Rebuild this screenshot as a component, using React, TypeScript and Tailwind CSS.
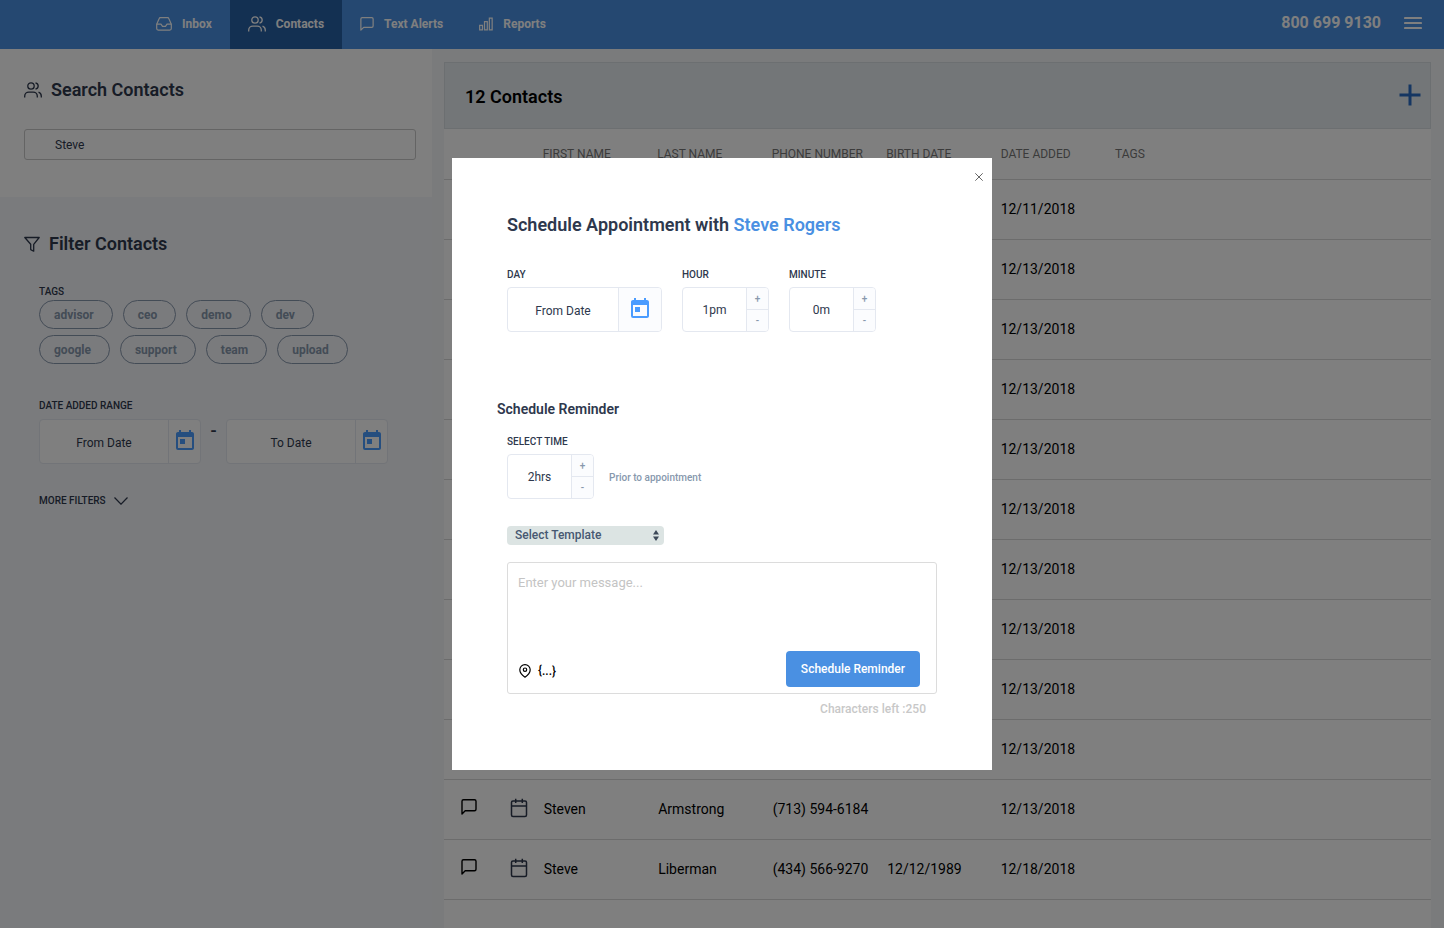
import { useState } from "react";
import type { ReactNode } from "react";
import { MdToday } from "react-icons/md";

type IconProps = { className?: string };

const UsersIcon = ({ className }: IconProps) => (
  <svg viewBox="0 0 18 16" fill="none" stroke="currentColor" strokeWidth="1.3" className={className}>
    <circle cx="7" cy="4" r="3.2" />
    <path d="M11.500 0.900c1.600.4 2.700 1.600 2.700 3.100s-1.100 2.700-2.700 3.100" />
    <path d="M0.700 15.500v-1.300c0-2.300 1.800-4.100 4.100-4.100h4.400c2.300 0 4.100 1.800 4.100 4.100v1.300" />
    <path d="M14.500 10.200c1.700.6 2.800 2.100 2.800 4v1.300" />
  </svg>
);

const ChatIcon = ({ className }: IconProps) => (
  <svg viewBox="0 0 16 16" fill="none" stroke="currentColor" strokeWidth="1.4" strokeLinejoin="round" className={className}>
    <path d="M15 10.300c0 .8-.7 1.500-1.500 1.500H4.200L1 15V2.300C1 1.500 1.700.8 2.500.8h11c.8 0 1.500.7 1.500 1.500z" />
  </svg>
);

const InboxIcon = ({ className }: IconProps) => (
  <svg viewBox="0 0 16 14" fill="none" stroke="currentColor" strokeWidth="1.2" strokeLinejoin="round" className={className}>
    <path d="M15.300 7.200h-4.300l-1.500 2.200h-3L5 7.200H.7" />
    <path d="M3.200 1.500.7 7.200v4.400c0 .9.6 1.500 1.500 1.500h11.600c.9 0 1.500-.6 1.500-1.500V7.200l-2.500-5.700C12.600.9 12.200.7 11.700.7H4.300c-.5 0-.9.2-1.100.8z" />
  </svg>
);

const BarsIcon = ({ className }: IconProps) => (
  <svg viewBox="0 0 15 14" fill="none" stroke="currentColor" strokeWidth="1.3" className={className}>
    <path d="M.7 8.500h3v4.800h-3zM5.900 4.500h3v8.800h-3zM11.100.7h3v12.600h-3z" />
  </svg>
);

const FilterIcon = ({ className }: IconProps) => (
  <svg viewBox="0 0 16 16" fill="none" stroke="currentColor" strokeWidth="1.300" strokeLinejoin="round" className={className}>
    <path d="M.8 1.500h14.400L9.700 8.300v6.900l-3-1.600V8.300z" />
  </svg>
);

const CalendarIcon = ({ className }: IconProps) => (
  <svg viewBox="0 0 18 20" fill="none" stroke="currentColor" strokeWidth="1.500" strokeLinejoin="round" className={className}>
    <rect x="1.500" y="3" width="15" height="15.500" rx="1.500" />
    <path d="M1.500 8h15M5.700.8v4.200M12.300.8v4.200" />
  </svg>
);

const PinIcon = ({ className }: IconProps) => (
  <svg viewBox="0 0 12 14" fill="none" stroke="currentColor" strokeWidth="1.200" strokeLinejoin="round" className={className}>
    <path d="M11.200 5.800c0 4-5.200 7.400-5.200 7.400S.8 9.800.8 5.800a5.200 5.200 0 0 1 10.400 0z" />
    <circle cx="6" cy="5.700" r="1.700" />
  </svg>
);

const navItems = [
  { label: "Inbox", icon: <InboxIcon className="h-3.5 w-4" /> },
  { label: "Contacts", icon: <UsersIcon className="h-4 w-[18px]" />, active: true },
  { label: "Text Alerts", icon: <ChatIcon className="h-3.5 w-3.5" /> },
  { label: "Reports", icon: <BarsIcon className="h-3.5 w-3.5" /> },
];

const tags = ["advisor", "ceo", "demo", "dev", "google", "support", "team", "upload"];

const columns = ["First Name", "Last Name", "Phone Number", "Birth Date", "Date Added", "Tags"];

interface Contact {
  first?: string;
  last?: string;
  phone?: string;
  birth?: string;
  added: string;
}

const contacts: Contact[] = [
  { added: "12/11/2018" },
  ...Array.from({ length: 9 }, () => ({ added: "12/13/2018" })),
  { first: "Steven", last: "Armstrong", phone: "(713) 594-6184", added: "12/13/2018" },
  { first: "Steve", last: "Liberman", phone: "(434) 566-9270", birth: "12/12/1989", added: "12/18/2018" },
];

function FieldLabel({ htmlFor, children }: { htmlFor: string; children: ReactNode }) {
  return (
    <label htmlFor={htmlFor} className="block text-[10px] leading-4 font-medium text-[#2e384d] uppercase">
      {children}
    </label>
  );
}

function DateField({ id, placeholder, width, button }: { id: string; placeholder: string; width: string; button: string }) {
  return (
    <div className={`flex h-[45px] overflow-hidden rounded border border-[#e4e8f0] bg-white ${width}`}>
      <input
        id={id}
        type="text"
        aria-label={placeholder}
        placeholder={placeholder}
        className="min-w-0 flex-1 pt-0.5 text-center text-xs text-[#2e384d] outline-none placeholder:text-[#2e384d]"
      />
      <button type="button" aria-label="Open calendar" className={`flex items-center justify-center border-l border-[#e4e8f0] pb-0.5 text-[#4a9cff] ${button}`}>
        <MdToday className="h-6 w-6" />
      </button>
    </div>
  );
}

function Stepper({ id, start, unit }: { id: string; start: number; unit: string }) {
  const [value, setValue] = useState(start);
  return (
    <div className="flex h-[45px] w-[87px] overflow-hidden rounded border border-[#e4e8f0] bg-white">
      <input
        id={id}
        type="text"
        readOnly
        value={`${value}${unit}`}
        className="min-w-0 flex-1 text-center text-xs text-[#2e384d] outline-none"
      />
      <div className="flex w-[22px] flex-col border-l border-[#e4e8f0] bg-[#fbfcfe] text-[10px] text-[#8798ad]">
        <button type="button" aria-label="Increase" onClick={() => setValue(value + 1)} className="flex-1 border-b border-[#e4e8f0] font-medium">
          +
        </button>
        <button type="button" aria-label="Decrease" onClick={() => setValue(Math.max(0, value - 1))} className="flex-1 font-medium">
          -
        </button>
      </div>
    </div>
  );
}

function TopBar() {
  return (
    <header className="flex h-[49px] shrink-0 items-stretch justify-between bg-[#4a90e2] pr-[22px] pl-[138px] text-white">
      <nav className="flex">
        {navItems.map((item) => (
          <a
            key={item.label}
            href="#"
            className={`flex items-center gap-2.5 px-[18px] pb-0.5 text-xs font-bold ${item.active ? "bg-[#2760a4]" : ""}`}
          >
            {item.icon}
            {item.label}
          </a>
        ))}
      </nav>
      <div className="flex items-center gap-[23px] pb-1">
        <span className="text-base font-bold">800 699 9130</span>
        <button type="button" aria-label="Menu">
          <svg viewBox="0 0 18 14" className="h-3.5 w-[18px]" stroke="currentColor" strokeWidth="2.200" strokeLinecap="round">
            <path d="M1 2h16M1 7h16M1 12h16" />
          </svg>
        </button>
      </div>
    </header>
  );
}

function Sidebar() {
  return (
    <aside className="w-[30%] max-w-[432px] shrink-0 bg-[#f5f6fa] text-[#2e384d]">
      <section className="h-[148px] bg-white px-6 pt-[27px] pr-4">
        <h2 className="flex items-center gap-[9px] text-lg font-semibold">
          <UsersIcon className="h-4 w-[18px]" />
          Search Contacts
        </h2>
        <input
          type="text"
          aria-label="Search contacts"
          defaultValue="Steve"
          className="mt-[25px] h-[31px] w-full rounded-[3px] border border-[#c8c8c8] px-[30px] text-xs outline-none"
        />
      </section>

      <section className="px-6 pt-[33px]">
        <h2 className="flex items-center gap-[9px] text-lg font-semibold">
          <FilterIcon className="h-4 w-4" />
          Filter Contacts
        </h2>

        <div className="pl-[15px]">
          <p className="mt-[26px] text-[10px] leading-4 font-medium">TAGS</p>
          <div className="flex max-w-[330px] flex-wrap gap-x-2.5 gap-y-1.5">
            {tags.map((tag) => (
              <button
                key={tag}
                type="button"
                className="h-[29px] rounded-full border border-[#8798ad] pr-[18px] pl-3.5 text-xs font-bold text-[#8798ad]"
              >
                {tag}
              </button>
            ))}
          </div>

          <div className="mt-[34px]">
            <FieldLabel htmlFor="range-from">Date added range</FieldLabel>
          </div>
          <div className="mt-[5px] flex">
            <DateField id="range-from" placeholder="From Date" width="w-[162px]" button="w-8" />
            <span className="w-[25px] text-center text-lg leading-6 font-medium">-</span>
            <DateField id="range-to" placeholder="To Date" width="w-[162px]" button="w-8" />
          </div>

          <button type="button" className="mt-[29px] flex items-center gap-2 text-[10px] leading-4 font-medium">
            MORE FILTERS
            <svg viewBox="0 0 14 8" fill="none" stroke="currentColor" strokeWidth="1.200" className="h-2 w-3.5">
              <path d="M.5.5 7 7.200 13.500.5" />
            </svg>
          </button>
        </div>
      </section>
    </aside>
  );
}

function ContactsPanel() {
  return (
    <main className="min-w-0 flex-1 bg-[#f5f6f8] pt-[13px] pr-[13px] pl-3">
      <div className="h-full bg-white">
        <div className="flex h-[67px] items-center justify-between border border-[#d9dfe2] bg-[#e6edf1] pr-[9px] pl-5">
          <h1 className="pt-0.5 text-lg font-semibold text-black">12 Contacts</h1>
          <button type="button" aria-label="Add contact" className="pb-0.5 text-[#2a6cc4]">
            <svg viewBox="0 0 22 22" className="h-[22px] w-[22px]" stroke="currentColor" strokeWidth="3">
              <path d="M11 .5v21M.5 11h21" />
            </svg>
          </button>
        </div>
        <table className="w-full table-fixed text-left">
          <colgroup>
            <col className="w-[5%]" />
            <col className="w-[5%]" />
            <col className="w-[11.6%]" />
            <col className="w-[11.6%]" />
            <col className="w-[11.6%]" />
            <col className="w-[11.6%]" />
            <col className="w-[11.6%]" />
            <col />
          </colgroup>
          <thead>
            <tr className="h-[50px] border-b border-[#d8d8d8] text-xs text-[#777] uppercase">
              <th aria-label="Message" />
              <th aria-label="Appointment" />
              {columns.map((column) => (
                <th key={column} className="font-normal whitespace-nowrap">
                  {column}
                </th>
              ))}
            </tr>
          </thead>
          <tbody>
            {contacts.map((contact, i) => (
              <tr key={i} className="h-[60px] border-b border-[#d8d8d8] text-sm whitespace-nowrap text-black">
                <td className="pb-1 pl-[17px]">
                  <button type="button" aria-label="Send message" className="block">
                    <ChatIcon className="h-4 w-4" />
                  </button>
                </td>
                <td className="pb-0.5 pl-[17px]">
                  <button type="button" aria-label="Schedule appointment" className="block text-[#2e384d]">
                    <CalendarIcon className="h-5 w-[18px]" />
                  </button>
                </td>
                <td className="pl-px">{contact.first}</td>
                <td className="pl-px">{contact.last}</td>
                <td className="pl-px">{contact.phone}</td>
                <td className="pl-px">{contact.birth}</td>
                <td>{contact.added}</td>
                <td />
              </tr>
            ))}
          </tbody>
        </table>
      </div>
    </main>
  );
}

function AppointmentModal({ onClose }: { onClose: () => void }) {
  const [message, setMessage] = useState("");
  return (
    <div className="fixed inset-0 z-10 flex items-center justify-center bg-black/50">
      <div role="dialog" aria-labelledby="appointment-title" className="relative w-full max-w-[540px] bg-white px-[55px] pt-[53px] pb-[51px] text-[#2e384d]">
        <button type="button" aria-label="Close" onClick={onClose} className="absolute top-[15px] right-[9px] text-[#555]">
          <svg viewBox="0 0 8 8" className="h-2 w-2" stroke="currentColor" strokeWidth="0.900">
            <path d="M.3.3l7.400 7.400M7.700.3.3 7.700" />
          </svg>
        </button>

        <h2 id="appointment-title" className="text-lg leading-7 font-semibold">
          Schedule Appointment with <span className="text-[#4a90e2]">Steve Rogers</span>
        </h2>

        <div className="mt-7 flex gap-5">
          <div className="space-y-1">
            <FieldLabel htmlFor="day">Day</FieldLabel>
            <DateField id="day" placeholder="From Date" width="w-[155px]" button="w-[43px] bg-[#fbfcfe]" />
          </div>
          <div className="space-y-1">
            <FieldLabel htmlFor="hour">Hour</FieldLabel>
            <Stepper id="hour" start={1} unit="pm" />
          </div>
          <div className="space-y-1">
            <FieldLabel htmlFor="minute">Minute</FieldLabel>
            <Stepper id="minute" start={0} unit="m" />
          </div>
        </div>

        <h3 className="-ml-2.5 mt-[67px] text-sm font-semibold">Schedule Reminder</h3>
        <div className="mt-[15px] space-y-1">
          <FieldLabel htmlFor="lead-time">Select time</FieldLabel>
          <div className="flex items-center gap-[15px]">
            <Stepper id="lead-time" start={2} unit="hrs" />
            <span className="pt-0.5 text-[10px] font-medium text-[#8798ad]">Prior to appointment</span>
          </div>
        </div>

        <div className="relative mt-[27px] h-[19px] w-[157px]">
          <select aria-label="Template" className="block h-full w-full appearance-none rounded bg-[#dce4e3] pb-0.5 pl-2 text-xs font-medium text-[#475872] outline-none">
            <option>Select Template</option>
          </select>
          <svg viewBox="0 0 6 11" className="pointer-events-none absolute top-1 right-[5px] h-[11px] w-1.5" fill="#3c4858">
            <path d="M3 0l3 4.500H0zM3 11l3-4.500H0z" />
          </svg>
        </div>

        <div className="mt-[17px] flex h-[132px] flex-col rounded-[3px] border border-[#dcdcdc]">
          <textarea
            aria-label="Message"
            maxLength={250}
            value={message}
            onChange={(e) => setMessage(e.target.value)}
            placeholder="Enter your message..."
            className="min-h-0 flex-1 resize-none px-2.5 pt-2.5 text-[13px] leading-5 outline-none placeholder:text-[#c4c4c4]"
          />
          <div className="flex items-center justify-between pr-4 pb-1.5 pl-[11px] text-black">
            <div className="flex items-center gap-[7px] pt-1">
              <button type="button" aria-label="Insert location">
                <PinIcon className="h-3.5 w-3" />
              </button>
              <button type="button" className="text-xs font-medium">{"{...}"}</button>
            </div>
            <button type="button" className="h-9 rounded bg-[#4a90e2] px-[15px] text-xs font-medium text-white">
              Schedule Reminder
            </button>
          </div>
        </div>
        <p className="mt-[5px] pr-[11px] text-right text-xs leading-5 font-medium text-[#c8c8c8]">
          Characters left :{250 - message.length}
        </p>
      </div>
    </div>
  );
}

export default function App() {
  const [modalOpen, setModalOpen] = useState(true);
  return (
    <div className="flex h-screen flex-col overflow-hidden bg-[#f5f6f8] font-[Roboto,sans-serif]">
      <TopBar />
      <div className="flex min-h-0 flex-1">
        <Sidebar />
        <ContactsPanel />
      </div>
      {modalOpen && <AppointmentModal onClose={() => setModalOpen(false)} />}
    </div>
  );
}
